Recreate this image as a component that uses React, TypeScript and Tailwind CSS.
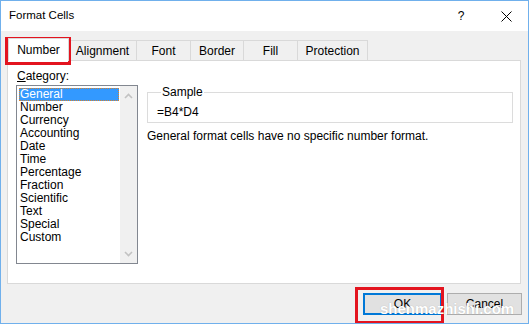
import { useState } from 'react'

const categories = [
  'General', 'Number', 'Currency', 'Accounting', 'Date', 'Time',
  'Percentage', 'Fraction', 'Scientific', 'Text', 'Special', 'Custom',
]

const tabs = [
  { label: 'Number', w: 'w-[61px]' },
  { label: 'Alignment', w: 'w-[68px]' },
  { label: 'Font', w: 'w-[54px]' },
  { label: 'Border', w: 'w-[53px]' },
  { label: 'Fill', w: 'w-[54px]' },
  { label: 'Protection', w: 'w-[70px]' },
]

function Chevron({ up }: { up?: boolean }) {
  return (
    <svg width="9" height="6" viewBox="0 0 9 6" className="text-[#c2c2c2]">
      <path d={up ? 'M1 5 L4.5 1.5 L8 5' : 'M1 1 L4.5 4.5 L8 1'} fill="none" stroke="currentColor" strokeWidth="1.6" />
    </svg>
  )
}

export default function App() {
  const [selected, setSelected] = useState('General')

  return (
    <div
      className="relative w-[529px] h-[324px] border border-[#70b0ec] bg-[#f0f0f0] flex flex-col text-[12px] text-black overflow-hidden"
      style={{ fontFamily: '"Liberation Sans", Arial, sans-serif' }}
    >
      {/* title bar */}
      <div className="h-[30px] bg-white flex items-center pl-[8px] shrink-0">
        <span className="flex-1 text-[11.5px]">Format Cells</span>
        <span className="w-[14px] text-center mr-[33px]">?</span>
        <svg width="11" height="11" viewBox="0 0 11 11" className="mr-[16px]">
          <path d="M0.5 0.5 L10.5 10.5 M10.5 0.5 L0.5 10.5" stroke="#000" strokeWidth="1" />
        </svg>
      </div>

      {/* tabs */}
      <div className="h-[29px] flex items-end pl-[7px] shrink-0">
        {tabs.map((t, i) =>
          i === 0 ? (
            <div key={t.label} className={`${t.w} h-[23px] -mb-px relative z-10 bg-white border border-b-0 border-[#d9d9d9] flex items-center justify-center`}>
              {t.label}
            </div>
          ) : (
            <div key={t.label} className={`${t.w} h-[20px] border border-b-0 border-l-0 border-[#d9d9d9] flex items-center justify-center`}>
              {t.label}
            </div>
          ),
        )}
      </div>

      {/* panel */}
      <div className="ml-[6px] w-[514px] h-[224px] bg-white border border-[#d9d9d9] shrink-0 pt-[8px] pl-[8px] pr-[7px]">
        <div className="leading-[15px] pl-[1px]"><span className="underline">C</span>ategory:</div>
        <div className="flex gap-[9px] mt-[1px]">
          <div className="w-[122px] h-[179px] border border-[#828790] flex">
            <div className="flex-1 pt-[2px] pl-[2px] pr-[1px]">
              {categories.map((c) => (
                <div
                  key={c}
                  onClick={() => setSelected(c)}
                  className={`h-[13px] leading-[13px] pl-[1px] whitespace-nowrap ${
                    c === selected ? 'bg-[#3399ff] text-white outline outline-1 outline-dotted outline-[#d9822b] -outline-offset-1' : ''
                  }`}
                >
                  {c}
                </div>
              ))}
            </div>
            <div className="w-[17px] bg-[#f0f0f0] flex flex-col items-center justify-between pt-[7px] pb-[6px]">
              <Chevron up />
              <Chevron />
            </div>
          </div>

          <div className="flex-1 flex flex-col">
            <fieldset className="border border-[#dcdcdc] pl-[9px] pt-[6px] pb-[2px] min-w-0">
              <legend className="ml-[4px] px-[1px] leading-[14px]">Sample</legend>
              <div className="leading-[15px]">=B4*D4</div>
            </fieldset>
            <div className="mt-[6px] leading-[15px]">General format cells have no specific number format.</div>
          </div>
        </div>
      </div>

      {/* buttons */}
      <div className="flex justify-end gap-[5px] pr-[6px] mt-[9px]">
        <button className="w-[79px] h-[22px] bg-[#e1e1e1] border-2 border-[#0078d7]">OK</button>
        <button className="w-[75px] h-[22px] bg-[#e1e1e1] border border-[#adadad]">Cancel</button>
      </div>

      {/* highlight boxes */}
      <div className="absolute left-[4px] top-[36px] w-[66px] h-[28px] border-[3px] border-[#e3141f] pointer-events-none" />
      <div className="absolute left-[354px] top-[286px] w-[89px] h-[37px] border-[3px] border-[#e3141f] pointer-events-none" />

      {/* watermark */}
      <div className="absolute left-[379px] top-[299px] text-white font-bold text-[15px] leading-[17px] pointer-events-none [text-shadow:0_0_1px_rgba(0,0,0,0.25)]">
        shenmazhishi.com
      </div>
    </div>
  )
}
